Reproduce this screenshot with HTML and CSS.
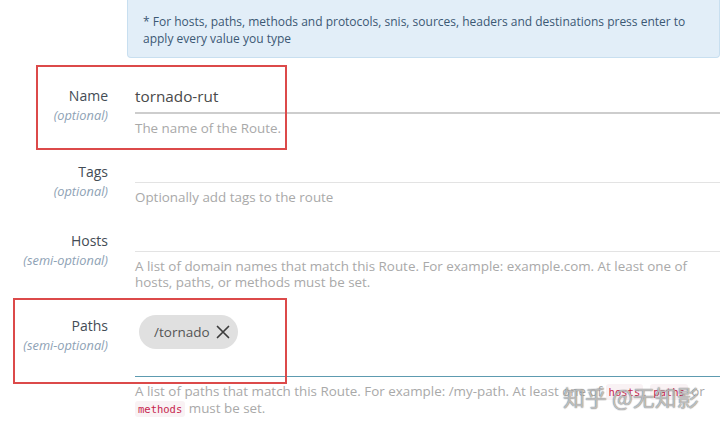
FILE: index.html
```html
<!DOCTYPE html>
<html>
<head>
<meta charset="utf-8">
<link rel="stylesheet" href="styles.css">
</head>
<body>
<div class="page">
  <div class="notice-row">
    <div class="notice">* For hosts, paths, methods and protocols, snis, sources, headers and destinations press enter to apply every value you type</div>
  </div>

  <div class="row row-name">
    <div class="label"><div class="lname">Name</div><div class="lopt">(optional)</div></div>
    <div class="field">
      <div class="input input-filled">tornado-rut</div>
      <div class="help">The name of the Route.</div>
    </div>
  </div>

  <div class="row">
    <div class="label"><div class="lname">Tags</div><div class="lopt">(optional)</div></div>
    <div class="field">
      <div class="input"></div>
      <div class="help">Optionally add tags to the route</div>
    </div>
  </div>

  <div class="row">
    <div class="label"><div class="lname">Hosts</div><div class="lopt">(semi-optional)</div></div>
    <div class="field">
      <div class="input"></div>
      <div class="help">A list of domain names that match this Route. For example: example.com. At least one of hosts, paths, or methods must be set.</div>
    </div>
  </div>

  <div class="row">
    <div class="label"><div class="lname">Paths</div><div class="lopt">(semi-optional)</div></div>
    <div class="field">
      <div class="input input-chips">
        <span class="chip">/tornado
          <svg class="chip-x" width="14" height="14" viewBox="0 0 14 14"><path d="M1.5 1.5 L12.5 12.5 M12.5 1.5 L1.5 12.5" stroke="#3d3d3d" stroke-width="1.7" fill="none" stroke-linecap="round"/></svg>
        </span>
      </div>
      <div class="help help-paths">A list of paths that match this Route. For example: /my-path. At least one of <code>hosts</code>, <code>paths</code> or <code>methods</code> must be set.</div>
    </div>
  </div>

  <div class="mark mark-name"></div>
  <div class="mark mark-paths"></div>
  <div class="watermark">知乎 @无知影</div>
</div>
</body>
</html>
```
FILE: styles.css
```css
html, body {
  margin: 0;
  padding: 0;
  background: #ffffff;
}
.page {
  position: relative;
  width: 720px;
  height: 429px;
  overflow: hidden;
  font-family: "Open Sans", "Liberation Sans", sans-serif;
}
.notice-row {
  padding-left: 127px;
}
.notice {
  background: #e2eef8;
  border: 1px solid #c8dff0;
  border-top: none;
  border-radius: 0 0 4px 4px;
  padding: 13px 30px 10px 15px;
  font-size: 12px;
  line-height: 17px;
  color: #3b5874;
}
.row {
  display: flex;
  margin-top: 20px;
}
.row-name {
  margin-top: 22px;
}
.label {
  width: 108px;
  flex: none;
  text-align: right;
  padding-top: 7px;
}
.lname {
  font-size: 14px;
  line-height: 18px;
  color: #444c55;
  font-weight: 500;
}
.lopt {
  font-size: 12.8px;
  line-height: 18px;
  font-style: italic;
  color: #8ea2b5;
  margin-top: 1px;
}
.field {
  flex: 1;
  margin-left: 27px;
}
.input {
  height: 26px;
  border-bottom: 1px solid #e3e3e3;
}
.input-filled {
  height: 25px;
  padding-top: 7px;
  font-size: 15.3px;
  line-height: 18px;
  color: #4a4a4a;
  border-bottom: 2px solid #cdcdcd;
}
.input-chips {
  height: 61px;
  padding-top: 5px;
  border-bottom: 1px solid #5d9bb0;
}
.chip {
  display: inline-flex;
  align-items: center;
  gap: 6px;
  height: 34px;
  margin-left: 4px;
  padding: 0 8px 0 15px;
  border-radius: 17px;
  background: #e0e0e0;
  font-size: 13.5px;
  color: #555;
}
.chip-x {
  display: block;
}
.help {
  margin-top: 6px;
  font-size: 13.4px;
  line-height: 16px;
  color: #a9a9a9;
  padding-right: 12px;
}
.help-paths {
  padding-right: 0;
}
code {
  font-family: "DejaVu Sans Mono", monospace;
  font-size: 10.5px;
  color: #c7254e;
  background: #f9f2f4;
  padding: 2px 3px;
  border-radius: 3px;
}
.mark {
  position: absolute;
  border: 2px solid #dc4a4a;
}
.mark-name {
  left: 36px;
  top: 65px;
  width: 247px;
  height: 81px;
}
.mark-paths {
  left: 13px;
  top: 298px;
  width: 270px;
  height: 82px;
}
.watermark {
  position: absolute;
  left: 563px;
  top: 382px;
  white-space: nowrap;
  font-family: "Noto Sans CJK SC", sans-serif;
  font-size: 22px;
  line-height: 28px;
  color: rgba(255, 255, 255, 0.55);
  text-shadow: 0 0 1px rgba(90, 90, 90, 0.7), 0 0 1px rgba(90, 90, 90, 0.7);
}
```
